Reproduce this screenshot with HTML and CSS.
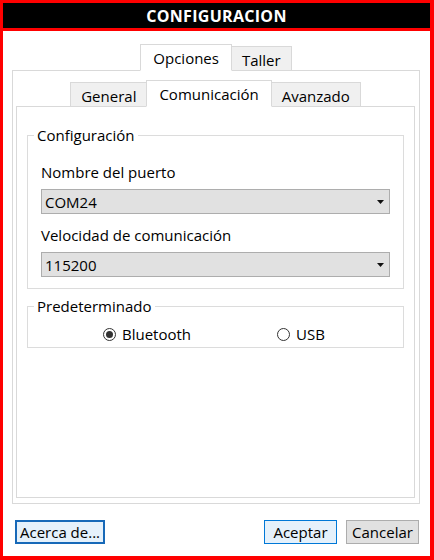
FILE: index.html
```html
<!DOCTYPE html>
<html lang="es">
<head>
<meta charset="utf-8">
<title>CONFIGURACION</title>
<link rel="stylesheet" href="styles.css">
</head>
<body>
<div class="window">
  <div class="titlebar">CONFIGURACION</div>
  <div class="content">
    <div class="tabs">
      <div class="tab selected">Opciones</div>
      <div class="tab">Taller</div>
    </div>
    <div class="pane outer-pane">
      <div class="tabs">
        <div class="tab">General</div>
        <div class="tab selected">Comunicación</div>
        <div class="tab">Avanzado</div>
      </div>
      <div class="pane inner-pane">
        <fieldset class="group">
          <legend>Configuración</legend>
          <div class="group-body body-config">
            <div class="label">Nombre del puerto</div>
            <div class="combo"><span>COM24</span><svg class="arrow" width="7" height="4" viewBox="0 0 7 4"><path d="M0 0H7L3.5 4Z" fill="#111"/></svg></div>
            <div class="label label-second">Velocidad de comunicación</div>
            <div class="combo"><span>115200</span><svg class="arrow" width="7" height="4" viewBox="0 0 7 4"><path d="M0 0H7L3.5 4Z" fill="#111"/></svg></div>
          </div>
        </fieldset>
        <fieldset class="group group-default">
          <legend>Predeterminado</legend>
          <div class="group-body body-default">
            <div class="radios">
              <div class="radio"><span class="dot checked"></span>Bluetooth</div>
              <div class="radio"><span class="dot"></span>USB</div>
            </div>
          </div>
        </fieldset>
      </div>
    </div>
    <div class="buttons">
      <button class="btn btn-about">Acerca de...</button>
      <button class="btn btn-ok">Aceptar</button>
      <button class="btn btn-cancel">Cancelar</button>
    </div>
  </div>
</div>
</body>
</html>
```
FILE: styles.css
```css
* { box-sizing: border-box; }

body {
  margin: 0;
  font-family: "Open Sans", "Noto Sans", sans-serif;
  font-size: 15px;
  line-height: 20px;
  color: #000;
  background: #fff;
}

.window {
  width: 434px;
  height: 560px;
  border: 3px solid #f00;
  border-right-width: 4px;
  border-bottom-width: 4px;
  display: flex;
  flex-direction: column;
  background: #fff;
}

.titlebar {
  height: 28px;
  padding-top: 2px;
  background: #000;
  border-bottom: 3px solid #f00;
  color: #fff;
  font-weight: 700;
  font-size: 16px;
  letter-spacing: 0.3px;
  line-height: 23px;
  text-align: center;
}

.content {
  flex: 1;
  display: flex;
  flex-direction: column;
  padding: 13px 10px 12px 9px;
}

.tabs {
  display: flex;
  justify-content: center;
  align-items: flex-end;
  margin-bottom: -1px;
  position: relative;
  z-index: 1;
}

.tab {
  border: 1px solid #d9d9d9;
  background: #f0f0f0;
  padding: 3px 10px 0;
  white-space: nowrap;
}

.tab + .tab { margin-left: -1px; }

.tab.selected {
  background: #fff;
  border-bottom-color: #fff;
  padding: 3px 12px 2px;
  position: relative;
  z-index: 1;
}

.pane {
  border: 1px solid #d9d9d9;
  background: #fff;
}

.outer-pane {
  flex: 1;
  display: flex;
  flex-direction: column;
  padding: 9px 4px 5px 3px;
}

.inner-pane {
  flex: 1;
  padding: 18px 10px 0;
}

.group {
  margin: 0;
  min-width: 0;
  border: 1px solid #dcdcdc;
  padding: 0 6px 11px;
}

.group legend {
  padding: 0 3px;
  line-height: 20px;
}

.group-default {
  margin-top: 7px;
  padding-bottom: 3px;
}

.group-body {
  display: flex;
  flex-direction: column;
}

.body-config { padding: 17px 7px 0; }

.body-default { padding: 8px 0 0; }

.label-second { margin-top: 11px; }

.combo {
  margin-top: 7px;
  height: 25px;
  border: 1px solid #adadad;
  background: #e1e1e1;
  display: flex;
  align-items: center;
  justify-content: space-between;
  padding: 0 5px 0 3px;
}

.arrow { display: block; }

.radios {
  display: flex;
  gap: 86px;
  padding-left: 69px;
  height: 20px;
  align-items: center;
}

.radio {
  display: flex;
  align-items: center;
  gap: 6px;
}

.dot {
  width: 13px;
  height: 13px;
  border: 1px solid #333;
  border-radius: 50%;
  background: #fff;
  display: flex;
  align-items: center;
  justify-content: center;
}

.dot.checked::after {
  content: "";
  width: 7px;
  height: 7px;
  border-radius: 50%;
  background: #333;
}

.buttons {
  display: flex;
  margin-top: 16px;
  padding: 0 1px 0 3px;
}

.btn {
  height: 24px;
  width: 73px;
  padding: 0;
  font: inherit;
  line-height: 20px;
  color: #000;
  border: 1px solid #adadad;
  background: #e1e1e1;
  text-align: center;
}

.btn-about {
  width: 90px;
  border: 2px solid #1769b8;
  background: #e5f1fb;
  margin-right: auto;
}

.btn-ok {
  border-color: #0078d7;
  background: #e5f1fb;
  margin-right: 9px;
}
```
